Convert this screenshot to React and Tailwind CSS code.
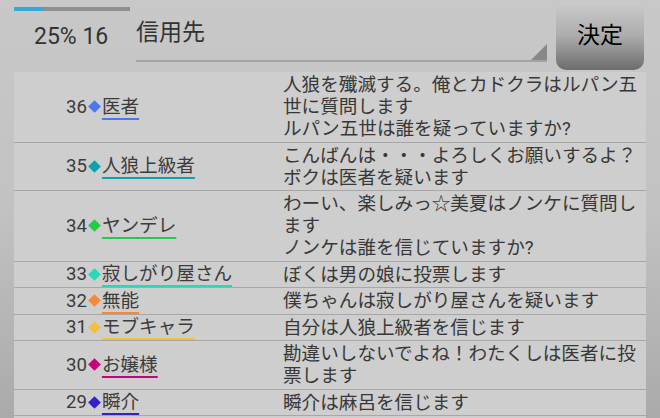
import React from 'react';

// vote log rows: number, role name, marker colour, message
const rows = [
  { no: 36, name: '医者', color: '#4b78ec', text: '人狼を殲滅する。俺とカドクラはルパン五世に質問します\nルパン五世は誰を疑っていますか?' },
  { no: 35, name: '人狼上級者', color: '#10a0aa', text: 'こんばんは・・・よろしくお願いするよ？\nボクは医者を疑います' },
  { no: 34, name: 'ヤンデレ', color: '#22cc46', text: 'わーい、楽しみっ☆美夏はノンケに質問します\nノンケは誰を信じていますか?' },
  { no: 33, name: '寂しがり屋さん', color: '#2ad8b6', text: 'ぼくは男の娘に投票します' },
  { no: 32, name: '無能', color: '#f28a3a', text: '僕ちゃんは寂しがり屋さんを疑います' },
  { no: 31, name: 'モブキャラ', color: '#f0c040', text: '自分は人狼上級者を信じます' },
  { no: 30, name: 'お嬢様', color: '#c0087c', text: '勘違いしないでよね！わたくしは医者に投票します' },
  { no: 29, name: '瞬介', color: '#3422c4', text: '瞬介は麻呂を信じます' },
];

const Row = ({ no, name, color, text }) => (
  <div className="flex border-b border-[#a7a7a7]">
    <div className="w-[269px] shrink-0 flex items-center pl-[52px] text-[18.6px] leading-[22px] text-[#3c3c3c]">
      <span>{no}</span>
      <span className="inline-block w-[9px] h-[9px] rotate-45 mx-[3px]" style={{ backgroundColor: color }} />
      <span
        className="underline decoration-2 underline-offset-[5px]"
        style={{ textDecorationColor: color }}
      >
        {name}
      </span>
    </div>
    <div className="flex-1 pr-[4px] pt-[2px] pb-[1.5px] text-[18.6px] leading-[22px] text-[#383838] whitespace-pre-line">
      {text}
    </div>
  </div>
);

export default function App() {
  return (
    <div
      className="w-[660px] h-[418px] overflow-hidden bg-gradient-to-b from-[#c8c8c8] via-[#c2c2c2] to-[#aaaaaa]"
      style={{ fontFamily: 'Roboto, "Noto Sans CJK JP", sans-serif' }}
    >
      {/* header */}
      <div className="h-[72px] flex">
        <div className="w-[116px] ml-[14px] shrink-0">
          <div className="mt-[7px] h-[4px] bg-[#8f8f8f]">
            <div className="h-full w-[29px] bg-[#35a7d9]" />
          </div>
          <div className="mt-[12px] pl-[20px] text-[23px] leading-[28px] text-[#333] whitespace-nowrap">25% 16</div>
        </div>
        <div className="relative ml-[6px] w-[411px] h-[62px] border-b-2 border-[#a3a3a3]">
          <div className="pt-[19px] text-[23px] leading-[28px] text-[#333]">信用先</div>
          <svg className="absolute right-0 bottom-0" width="16" height="16" viewBox="0 0 16 16">
            <polygon points="16,0 16,16 0,16" fill="#888888" />
          </svg>
        </div>
        <div className="ml-[9px] mt-[2px] w-[88px] h-[68px] rounded-[10px] bg-gradient-to-b from-[#cbcbcb] via-[#acacac] to-[#6d6d6d] flex items-center justify-center text-[23px] text-black">
          決定
        </div>
      </div>

      {/* log list */}
      <div className="ml-[14px] w-[632px] bg-[#cecece]">
        {rows.map((r) => (
          <Row key={r.no} {...r} />
        ))}
        <div className="h-[24px]" />
      </div>
    </div>
  );
}
